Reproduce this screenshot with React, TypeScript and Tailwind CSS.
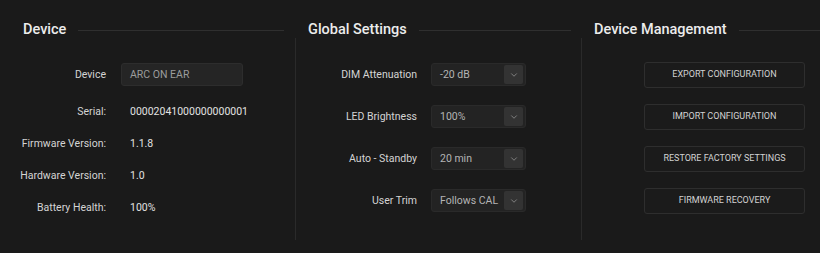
import { ChevronDown } from 'lucide-react'

const deviceInfo = [
  { label: 'Serial:', value: '00002041000000000001' },
  { label: 'Firmware Version:', value: '1.1.8' },
  { label: 'Hardware Version:', value: '1.0' },
  { label: 'Battery Health:', value: '100%' },
]

const globalSettings = [
  { label: 'DIM Attenuation', value: '-20 dB' },
  { label: 'LED Brightness', value: '100%' },
  { label: 'Auto - Standby', value: '20 min' },
  { label: 'User Trim', value: 'Follows CAL' },
]

const actions = ['EXPORT CONFIGURATION', 'IMPORT CONFIGURATION', 'RESTORE FACTORY SETTINGS', 'FIRMWARE RECOVERY']

function SectionHeader({ title, className }: { title: string; className: string }) {
  return (
    <div className={`flex items-center h-[16px] gap-[12px] ${className}`}>
      <h2 className="text-[14.5px] font-medium text-[#ececec] whitespace-nowrap leading-none">{title}</h2>
      <div className="flex-1 h-px bg-[#2f2f2f]" />
    </div>
  )
}

function Select({ value }: { value: string }) {
  return (
    <div className="ml-[14px] w-[95px] h-[23px] flex items-center justify-between rounded-[3px] bg-[#232323] border border-[#2a2a2a] pl-[8px] pr-[2px]">
      <span className="text-[10.5px] text-[#b4b4b4]">{value}</span>
      <div className="w-[19px] h-[19px] rounded-[2px] bg-[#333333] flex items-center justify-center">
        <ChevronDown size={10} strokeWidth={1.6} className="text-[#a4a4a4]" />
      </div>
    </div>
  )
}

export default function App() {
  return (
    <div className="w-[820px] h-[253px] bg-[#1a1a1a] pt-[22px] flex font-['Roboto','Liberation_Sans',sans-serif] overflow-hidden">
      {/* Device */}
      <div className="w-[295px] flex flex-col">
        <SectionHeader title="Device" className="pl-[23px] pr-[11px]" />
        <div className="h-[202px] pt-[25px] flex flex-col">
          <div className="flex items-center h-[23px]">
            <span className="w-[106px] text-right text-[10.5px] text-[#d4d4d4]">Device</span>
            <div className="ml-[15px] w-[122px] h-[23px] flex items-center pl-[8px] rounded-[3px] bg-[#252525] border border-[#2d2d2d] text-[10.5px] text-[#9c9c9c]">
              ARC ON EAR
            </div>
          </div>
          <div className="mt-[16px] flex flex-col gap-[12px]">
            {deviceInfo.map((row) => (
              <div key={row.label} className="flex items-center h-[20px]">
                <span className="w-[106px] text-right text-[10.5px] text-[#d4d4d4]">{row.label}</span>
                <span className="ml-[24px] text-[10.5px] text-[#e2e2e2]">{row.value}</span>
              </div>
            ))}
          </div>
        </div>
      </div>

      {/* Global Settings */}
      <div className="w-[286px] flex flex-col">
        <SectionHeader title="Global Settings" className="pl-[13px] pr-[10px]" />
        <div className="h-[202px] border-l border-[#2a2a2a] pt-[25px] flex flex-col gap-[19px]">
          {globalSettings.map((row) => (
            <div key={row.label} className="flex items-center h-[23px]">
              <span className="w-[121px] text-right text-[10.5px] text-[#d4d4d4]">{row.label}</span>
              <Select value={row.value} />
            </div>
          ))}
        </div>
      </div>

      {/* Device Management */}
      <div className="flex-1 flex flex-col">
        <SectionHeader title="Device Management" className="pl-[13px]" />
        <div className="h-[202px] border-l border-[#2a2a2a] pt-[24px] pl-[62px] flex flex-col gap-[16px]">
          {actions.map((label) => (
            <button
              key={label}
              className="w-[161px] h-[26px] rounded-[3px] border border-[#2e2e2e] bg-[#1b1b1b] text-[9px] text-[#d2d2d2]"
            >
              {label}
            </button>
          ))}
        </div>
      </div>
    </div>
  )
}
